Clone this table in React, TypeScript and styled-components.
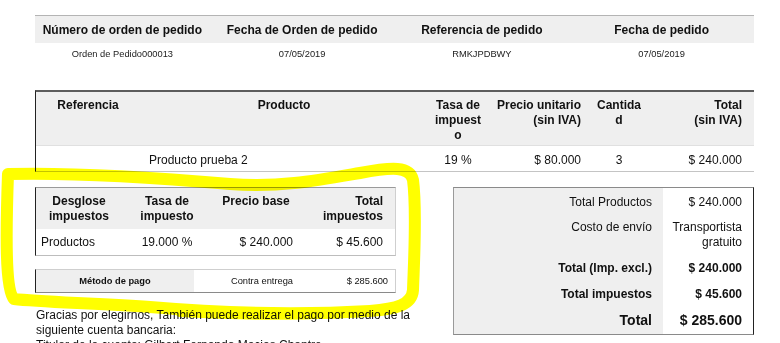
import React from "react";
import styled, { createGlobalStyle } from "styled-components";

const GlobalStyle = createGlobalStyle`
  html, body { margin: 0; padding: 0; background: #fff; overflow: hidden; }
  body { font-family: "Liberation Sans", Arial, sans-serif; color: #111; }
`;

const Page = styled.div`
  position: relative;
  width: 780px;
  height: 343px;
  overflow: hidden;
  background: #fff;
`;

const Content = styled.div`
  width: 719px;
  padding: 15px 0 0 35px;
`;

/* ---------- order info ---------- */
const InfoTable = styled.div`
  display: grid;
  grid-template-columns: repeat(4, 1fr);
  border-top: 1px solid #b4b4b4;
`;

const InfoHead = styled.div`
  background: #efefef;
  font-weight: bold;
  font-size: 12px;
  line-height: 15px;
  padding: 7px 5px 5px 0;
  text-align: center;
  white-space: nowrap;
`;

const InfoCell = styled.div`
  font-size: 9.3px;
  line-height: 12px;
  padding: 5px 5px 3px 0;
  text-align: center;
  color: #1a1a1a;
`;

/* ---------- product table ---------- */
const ProductTable = styled.div`
  margin-top: 27px;
  display: grid;
  grid-template-columns: 104px 288px 60px 100px 62px 1fr;
  border-top: 2px solid #5c5c5c;
  border-left: 1px solid #222;
  border-bottom: 1px solid #c4c4c4;
`;

type Align = "left" | "center" | "right";

const PHead = styled.div<{ $align: Align; $pad?: string }>`
  background: #efefef;
  font-weight: bold;
  font-size: 12px;
  line-height: 15px;
  padding: ${(p) => p.$pad ?? "6px 4px 2px"};
  text-align: ${(p) => p.$align};
  overflow-wrap: anywhere;
  border-bottom: 1px solid #e0e0e0;
`;

const Keep = styled.span`
  white-space: nowrap;
`;

const PCell = styled.div<{ $align: Align; $pad?: string }>`
  font-size: 12px;
  line-height: 15px;
  padding: ${(p) => p.$pad ?? "7px 4px 3px"};
  text-align: ${(p) => p.$align};
`;

/* ---------- lower section ---------- */
const Lower = styled.div`
  margin-top: 15px;
  display: flex;
  justify-content: space-between;
  align-items: flex-start;
`;

const LeftCol = styled.div`
  width: 385px;
`;

const TaxTable = styled.div`
  width: 359px;
  display: grid;
  grid-template-columns: 86px 90px 88px 1fr;
  border-top: 1px solid #9a9a9a;
  border-left: 1px solid #222;
  border-right: 1px solid #cfcfcf;
  border-bottom: 1px solid #bdbdbd;
`;

const THead = styled.div<{ $align: Align; $pad?: string }>`
  background: #efefef;
  font-weight: bold;
  font-size: 12px;
  line-height: 15px;
  padding: ${(p) => p.$pad ?? "6px 3px 5px"};
  text-align: ${(p) => p.$align};
`;

const TCell = styled.div<{ $align: Align; $pad?: string }>`
  font-size: 12px;
  line-height: 15px;
  padding: ${(p) => p.$pad ?? "6px 3px 5px"};
  text-align: ${(p) => p.$align};
`;

const PayTable = styled.div`
  margin-top: 13px;
  width: 359px;
  display: grid;
  grid-template-columns: 158px 136px 1fr;
  border-top: 1px solid #cfcfcf;
  border-left: 1px solid #222;
  border-right: 1px solid #cfcfcf;
  border-bottom: 1px solid #8a8a8a;
`;

const PayCell = styled.div<{ $align: Align; $label?: boolean; $pad?: string }>`
  background: ${(p) => (p.$label ? "#efefef" : "transparent")};
  font-weight: ${(p) => (p.$label ? "bold" : "normal")};
  font-size: 9.3px;
  line-height: 13px;
  padding: ${(p) => p.$pad ?? "5px 3px 4px"};
  text-align: ${(p) => p.$align};
`;

const Note = styled.p`
  margin: 15px 0 0;
  font-size: 12px;
  line-height: 15px;
  padding-left: 1px;
`;

const TotalsBox = styled.div`
  width: 299px;
  display: grid;
  grid-template-columns: 209px 1fr;
  border-top: 1px solid #8a8a8a;
  border-left: 1px solid #9a9a9a;
  border-right: 1px solid #222;
  border-bottom: 1px solid #8a8a8a;
`;

const TLabel = styled.div<{ $bold?: boolean; $big?: boolean; $pad: string }>`
  background: #efefef;
  text-align: right;
  font-size: ${(p) => (p.$big ? "14px" : "12px")};
  line-height: ${(p) => (p.$big ? "17px" : "15px")};
  font-weight: ${(p) => (p.$bold ? "bold" : "normal")};
  padding: ${(p) => p.$pad};
  padding-right: 11px;
`;

const TValue = styled.div<{ $bold?: boolean; $big?: boolean; $pad: string }>`
  text-align: right;
  font-size: ${(p) => (p.$big ? "14px" : "12px")};
  line-height: ${(p) => (p.$big ? "17px" : "15px")};
  font-weight: ${(p) => (p.$bold ? "bold" : "normal")};
  padding: ${(p) => p.$pad};
  padding-right: 11px;
  padding-left: 6px;
`;

const Highlight = styled.svg`
  position: absolute;
  top: 0;
  left: 0;
  pointer-events: none;
  mix-blend-mode: multiply;
`;

const totals = [
  { label: "Total Productos", value: "$ 240.000", pad: "7px 0 5px" },
  { label: "Costo de envío", value: "Transportista gratuito", pad: "5px 0 5px" },
  { label: "Total (Imp. excl.)", value: "$ 240.000", bold: true, pad: "6px 0 5px" },
  { label: "Total impuestos", value: "$ 45.600", bold: true, pad: "6px 0 5px" },
  { label: "Total", value: "$ 285.600", bold: true, big: true, pad: "5px 0 5px" },
];

export default function App() {
  return (
    <Page>
      <GlobalStyle />
      <Content>
        <InfoTable>
          <InfoHead>Número de orden de pedido</InfoHead>
          <InfoHead>Fecha de Orden de pedido</InfoHead>
          <InfoHead>Referencia de pedido</InfoHead>
          <InfoHead>Fecha de pedido</InfoHead>
          <InfoCell>Orden de Pedido000013</InfoCell>
          <InfoCell>07/05/2019</InfoCell>
          <InfoCell>RMKJPDBWY</InfoCell>
          <InfoCell>07/05/2019</InfoCell>
        </InfoTable>

        <ProductTable>
          <PHead $align="center">Referencia</PHead>
          <PHead $align="center">Producto</PHead>
          <PHead $align="center">Tasa de impuesto</PHead>
          <PHead $align="right" $pad="6px 7px 2px 4px">
            Precio unitario <Keep>(sin IVA)</Keep>
          </PHead>
          <PHead $align="center" $pad="6px 6px 2px">
            Cantidad
          </PHead>
          <PHead $align="right" $pad="6px 12px 2px 24px">
            Total <Keep>(sin IVA)</Keep>
          </PHead>

          <PCell $align="center" />
          <PCell $align="left" $pad="7px 4px 3px 9px">
            Producto prueba 2
          </PCell>
          <PCell $align="center">19 %</PCell>
          <PCell $align="right" $pad="7px 7px 3px 4px">
            $ 80.000
          </PCell>
          <PCell $align="center">3</PCell>
          <PCell $align="right" $pad="7px 12px 3px 4px">
            $ 240.000
          </PCell>
        </ProductTable>

        <Lower>
          <LeftCol>
            <TaxTable>
              <THead $align="center">Desglose impuestos</THead>
              <THead $align="center">Tasa de impuesto</THead>
              <THead $align="center">Precio base</THead>
              <THead $align="right" $pad="6px 12px 5px 3px">
                Total impuestos
              </THead>
              <TCell $align="left" $pad="6px 3px 5px 5px">
                Productos
              </TCell>
              <TCell $align="center">19.000 %</TCell>
              <TCell $align="right" $pad="6px 7px 5px 3px">
                $ 240.000
              </TCell>
              <TCell $align="right" $pad="6px 12px 5px 3px">
                $ 45.600
              </TCell>
            </TaxTable>

            <PayTable>
              <PayCell $align="center" $label>
                Método de pago
              </PayCell>
              <PayCell $align="center">Contra entrega</PayCell>
              <PayCell $align="right" $pad="5px 7px 4px 3px">
                $ 285.600
              </PayCell>
            </PayTable>

            <Note>
              Gracias por elegirnos, También puede realizar el pago por medio de la
              siguiente cuenta bancaria:
              <br />
              Titular de la cuenta: Gilbert Fernando Macias Chantre
            </Note>
          </LeftCol>

          <TotalsBox>
            {totals.map((t) => (
              <React.Fragment key={t.label}>
                <TLabel $bold={t.bold} $big={t.big} $pad={t.pad}>
                  {t.label}
                </TLabel>
                <TValue $bold={t.bold} $big={t.big} $pad={t.pad}>
                  {t.value}
                </TValue>
              </React.Fragment>
            ))}
          </TotalsBox>
        </Lower>
      </Content>

      <Highlight width="780" height="343" viewBox="0 0 780 343">
        <path
          d="M 8 174 C 80 172, 160 178, 230 184 C 280 188, 320 180, 360 173 C 392 167, 410 166, 413 180 C 417 210, 414 260, 413 290 C 412 305, 396 309, 370 311 C 300 315, 220 313, 150 307 C 90 303, 40 302, 14 299 C 5 290, 6 230, 8 174 Z"
          fill="none"
          stroke="#ffff00"
          strokeWidth="12"
          strokeLinejoin="round"
          strokeLinecap="round"
        />
        <path
          d="M 180 313 C 250 317, 320 317, 385 311"
          fill="none"
          stroke="#ffff00"
          strokeWidth="8"
          strokeLinecap="round"
        />
      </Highlight>
    </Page>
  );
}
